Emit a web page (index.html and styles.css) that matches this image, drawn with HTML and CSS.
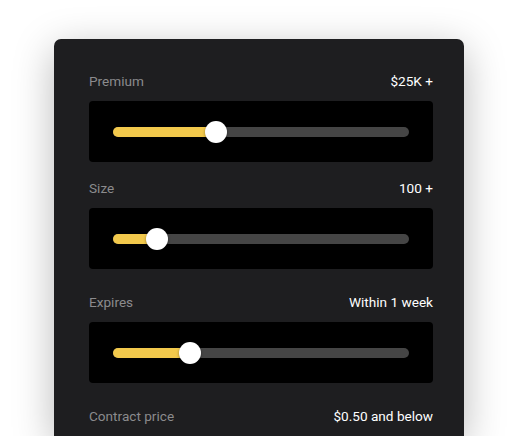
FILE: index.html
```html
<!DOCTYPE html>
<html>
<head>
<meta charset="utf-8">
<link rel="stylesheet" href="styles.css">
</head>
<body>
<div class="card">
  <div class="field field-first">
    <div class="row"><span class="label">Premium</span><span class="value">$25K +</span></div>
    <div class="box"><div class="track"><div class="fill" style="width: 103px"></div><div class="thumb"></div></div></div>
  </div>
  <div class="field field-tight">
    <div class="row"><span class="label">Size</span><span class="value">100 +</span></div>
    <div class="box"><div class="track"><div class="fill" style="width: 44px"></div><div class="thumb"></div></div></div>
  </div>
  <div class="field">
    <div class="row"><span class="label">Expires</span><span class="value">Within 1 week</span></div>
    <div class="box"><div class="track"><div class="fill" style="width: 77px"></div><div class="thumb"></div></div></div>
  </div>
  <div class="field">
    <div class="row"><span class="label">Contract price</span><span class="value">$0.50 and below</span></div>
  </div>
</div>
</body>
</html>
```
FILE: styles.css
```css
html, body {
  margin: 0;
  padding: 0;
  background: #ffffff;
  overflow: hidden;
}
body {
  width: 518px;
  height: 436px;
  font-family: Roboto, "Liberation Sans", sans-serif;
}
.card {
  margin: 39px 0 0 54px;
  width: 410px;
  height: 397px;
  box-sizing: border-box;
  padding: 32px 31px 0 35px;
  background: #1e1e20;
  border-radius: 7px 7px 0 0;
  box-shadow: 0 10px 40px rgba(0, 0, 0, 0.28);
}
.field { margin-top: 23px; }
.field-first { margin-top: 0; }
.field-tight { margin-top: 16px; }
.row {
  display: flex;
  justify-content: space-between;
  align-items: center;
  height: 20px;
  font-size: 13.6px;
}
.label { color: #8b8b8d; }
.value { color: #ffffff; }
.box {
  margin-top: 10px;
  height: 61px;
  background: #000000;
  border-radius: 4px;
  padding: 0 24px;
  display: flex;
  align-items: center;
}
.track {
  flex: 1;
  height: 10px;
  border-radius: 5px;
  background: #454545;
  display: flex;
  align-items: center;
}
.fill {
  height: 10px;
  border-radius: 5px 0 0 5px;
  background: #f2c94c;
}
.thumb {
  width: 22px;
  height: 22px;
  border-radius: 50%;
  background: #ffffff;
  margin-left: -11px;
  box-shadow: 0 1px 3px rgba(0, 0, 0, 0.4);
}
```
